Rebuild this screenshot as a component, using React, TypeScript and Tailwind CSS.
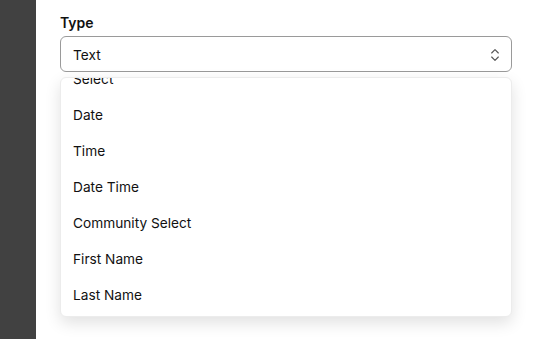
import { useLayoutEffect, useRef } from "react";
import { ChevronsUpDown } from "lucide-react";

const OPTIONS = [
  "Text",
  "Number",
  "Email",
  "Phone",
  "Select",
  "Date",
  "Time",
  "Date Time",
  "Community Select",
  "First Name",
  "Last Name",
];

export default function App() {
  const listRef = useRef<HTMLUListElement>(null);

  useLayoutEffect(() => {
    if (listRef.current) listRef.current.scrollTop = listRef.current.scrollHeight;
  }, []);

  return (
    <div className="flex h-[339px] w-[534px] overflow-hidden bg-white font-['Inter',sans-serif] text-[#111]">
      <aside className="w-9 shrink-0 bg-[#414141]" />
      <main className="flex-1 pl-6 pr-[22px] pt-[13px]">
        <label className="block text-sm font-semibold leading-5 text-[#111]">Type</label>
        <div className="relative mt-[3px]">
          <button className="flex h-9 w-full items-center justify-between rounded-md border border-[#9a9a9a] bg-white pl-3 pr-2 pt-[2px] text-[13.7px] text-[#111]">
            <span>Text</span>
            <ChevronsUpDown size={16} strokeWidth={1.75} className="text-[#555]" />
          </button>
          <ul
            ref={listRef}
            className="absolute left-0 right-0 top-[41px] h-[240px] overflow-hidden rounded-md border border-[#ececec] bg-white py-1 shadow-[0_6px_16px_rgba(0,0,0,0.12)]"
          >
            {OPTIONS.map((opt) => (
              <li key={opt} className="flex h-9 items-center px-3 pt-[2px] text-[13.7px] text-[#111]">
                {opt}
              </li>
            ))}
          </ul>
        </div>
      </main>
    </div>
  );
}
